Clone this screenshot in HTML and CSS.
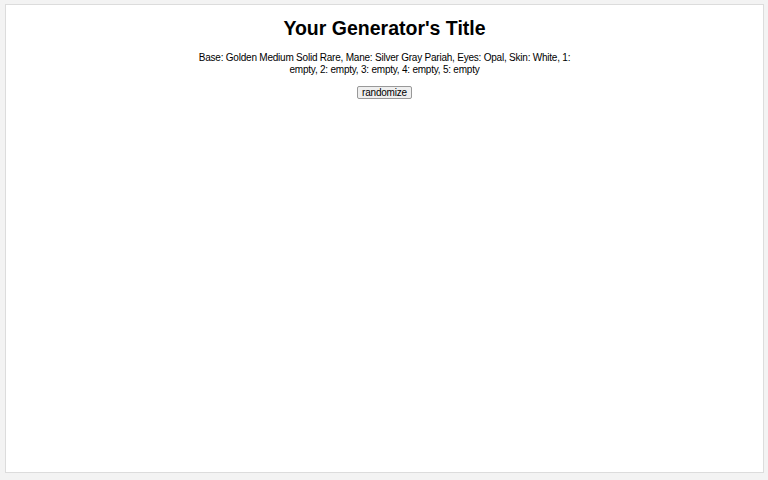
FILE: index.html
```html
<!DOCTYPE html>
<html>
<head>
<meta charset="utf-8">
<link rel="stylesheet" href="styles.css">
</head>
<body>
<div class="frame">
  <h1 class="title">Your Generator's Title</h1>
  <p class="result">Base: Golden Medium Solid Rare, Mane: Silver Gray Pariah, Eyes: Opal, Skin: White, 1: empty, 2: empty, 3: empty, 4: empty, 5: empty</p>
  <div class="actions"><button class="btn">randomize</button></div>
</div>
</body>
</html>
```
FILE: styles.css
```css
html, body { margin: 0; padding: 0; }
body {
  background: #f3f3f3;
  font-family: "Liberation Sans", Arial, sans-serif;
  color: #000;
  padding: 4px 4px 5px 5px;
}
.frame {
  background: #fff;
  border: 1px solid #dcdcdc;
  height: 469px;
  box-sizing: border-box;
  text-align: center;
  padding-top: 12px;
}
.title {
  font-size: 19.5px;
  font-weight: bold;
  margin: 0 0 13px;
  line-height: 22px;
}
.result {
  font-size: 10px;
  letter-spacing: -0.22px;
  line-height: 12px;
  max-width: 380px;
  margin: 0 auto 6px;
}
.btn {
  font-family: "Liberation Sans", Arial, sans-serif;
  font-size: 10px;
  letter-spacing: -0.2px;
  padding: 0 4px;
  background: #efefef;
  border: 1px solid #999;
  border-radius: 2px;
}
```
